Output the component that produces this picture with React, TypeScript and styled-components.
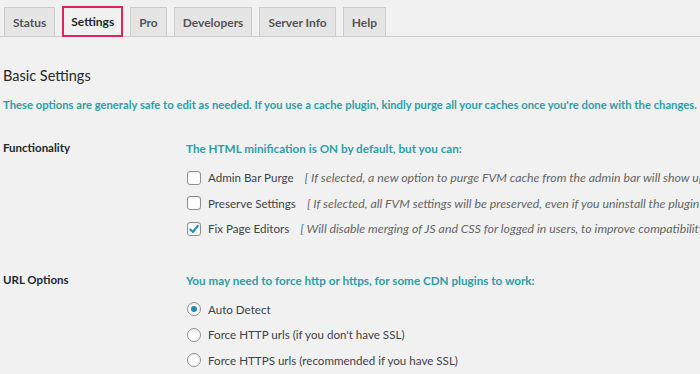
import React from 'react';
import styled, { createGlobalStyle } from 'styled-components';

const GlobalStyle = createGlobalStyle`
  html, body {
    margin: 0;
    padding: 0;
    background: #f1f1f1;
    overflow: hidden;
  }
  body {
    font-family: Lato, "Liberation Sans", sans-serif;
    color: #23282d;
  }
`;

const Page = styled.div`
  width: 700px;
  height: 374px;
  overflow: hidden;
  padding-left: 3px;
  box-sizing: border-box;
`;

const TabBar = styled.nav`
  display: flex;
  align-items: flex-end;
  gap: 7px;
  height: 37px;
  padding-left: 4px;
  margin-left: -3px;
  border-bottom: 1px solid #ccc;
  box-sizing: border-box;
`;

const Tab = styled.a<{ active?: boolean }>`
  display: flex;
  align-items: center;
  height: ${({ active }) => (active ? '31px' : '30px')};
  padding: 0 ${({ active }) => (active ? '7px' : '8px')};
  box-sizing: border-box;
  margin-bottom: -1px;
  font-size: 12px;
  font-weight: 700;
  color: ${({ active }) => (active ? '#23282d' : '#555')};
  background: ${({ active }) => (active ? '#f1f1f1' : '#e5e5e5')};
  border: ${({ active }) => (active ? '2px solid #e0245e' : '1px solid #ccc')};
  text-decoration: none;
`;

const Heading = styled.h2`
  margin: 0;
  padding-top: 29px;
  font-size: 14.5px;
  font-weight: 400;
  line-height: 20px;
  color: #23282d;
`;

const Intro = styled.p`
  margin: 10px 0 0;
  font-size: 11.25px;
  line-height: 18px;
  font-weight: 700;
  color: #2e9ea6;
  white-space: nowrap;
`;

const FormTable = styled.div`
  display: grid;
  grid-template-columns: 183px 1fr;
  row-gap: 33px;
  margin-top: 25px;
`;

const RowLabel = styled.div`
  font-size: 11.5px;
  font-weight: 700;
  line-height: 18px;
  color: #23282d;
`;

const Field = styled.div`
  display: flex;
  flex-direction: column;
  gap: 7.5px;
  white-space: nowrap;
`;

const FieldTitle = styled.div`
  font-size: 11.7px;
  font-weight: 700;
  line-height: 18px;
  color: #2e9ea6;
  margin-bottom: 4px;
`;

const Option = styled.label`
  display: flex;
  align-items: center;
  gap: 7px;
  height: 18px;
  font-size: 11.6px;
  color: #3c434a;
`;

const Box = styled.span<{ round?: boolean }>`
  display: inline-flex;
  align-items: center;
  justify-content: center;
  width: 14px;
  height: 14px;
  flex: none;
  margin-left: 1px;
  box-sizing: border-box;
  background: #fff;
  border: 1px solid #8c8f94;
  border-radius: ${({ round }) => (round ? '50%' : '3px')};
  box-shadow: inset 0 1px 2px rgba(0, 0, 0, 0.1);
`;

const Dot = styled.span`
  width: 6px;
  height: 6px;
  border-radius: 50%;
  background: #1e8cbe;
`;

const Note = styled.span`
  font-style: italic;
  font-size: 12.3px;
  color: #666;
  margin-left: 4px;
`;

const Check = () => (
  <svg width="12" height="12" viewBox="0 0 16 16">
    <path d="M3 8.5 L6.5 12 L13 3.8" fill="none" stroke="#1e8cbe" strokeWidth="2.8" strokeLinecap="round" strokeLinejoin="round" />
  </svg>
);

const tabs = ['Status', 'Settings', 'Pro', 'Developers', 'Server Info', 'Help'];

const checks = [
  { label: 'Admin Bar Purge', note: '[ If selected, a new option to purge FVM cache from the admin bar will show up ]', on: false },
  { label: 'Preserve Settings', note: '[ If selected, all FVM settings will be preserved, even if you uninstall the plugin ]', on: false },
  { label: 'Fix Page Editors', note: '[ Will disable merging of JS and CSS for logged in users, to improve compatibility with page editors ]', on: true },
];

const radios = [
  { label: 'Auto Detect', on: true },
  { label: "Force HTTP urls (if you don't have SSL)", on: false },
  { label: 'Force HTTPS urls (recommended if you have SSL)', on: false },
];

export default function App() {
  return (
    <Page>
      <GlobalStyle />
      <TabBar>
        {tabs.map((t) => (
          <Tab key={t} active={t === 'Settings'}>
            {t}
          </Tab>
        ))}
      </TabBar>
      <Heading>Basic Settings</Heading>
      <Intro>
        These options are generaly safe to edit as needed. If you use a cache plugin, kindly purge all your caches once you're done with the changes.
      </Intro>
      <FormTable>
        <RowLabel>Functionality</RowLabel>
        <Field>
          <FieldTitle>The HTML minification is ON by default, but you can:</FieldTitle>
          {checks.map((c) => (
            <Option key={c.label}>
              <Box>{c.on && <Check />}</Box>
              {c.label}
              <Note>{c.note}</Note>
            </Option>
          ))}
        </Field>
        <RowLabel>URL Options</RowLabel>
        <Field>
          <FieldTitle>You may need to force http or https, for some CDN plugins to work:</FieldTitle>
          {radios.map((r) => (
            <Option key={r.label}>
              <Box round>{r.on && <Dot />}</Box>
              {r.label}
            </Option>
          ))}
        </Field>
      </FormTable>
    </Page>
  );
}
